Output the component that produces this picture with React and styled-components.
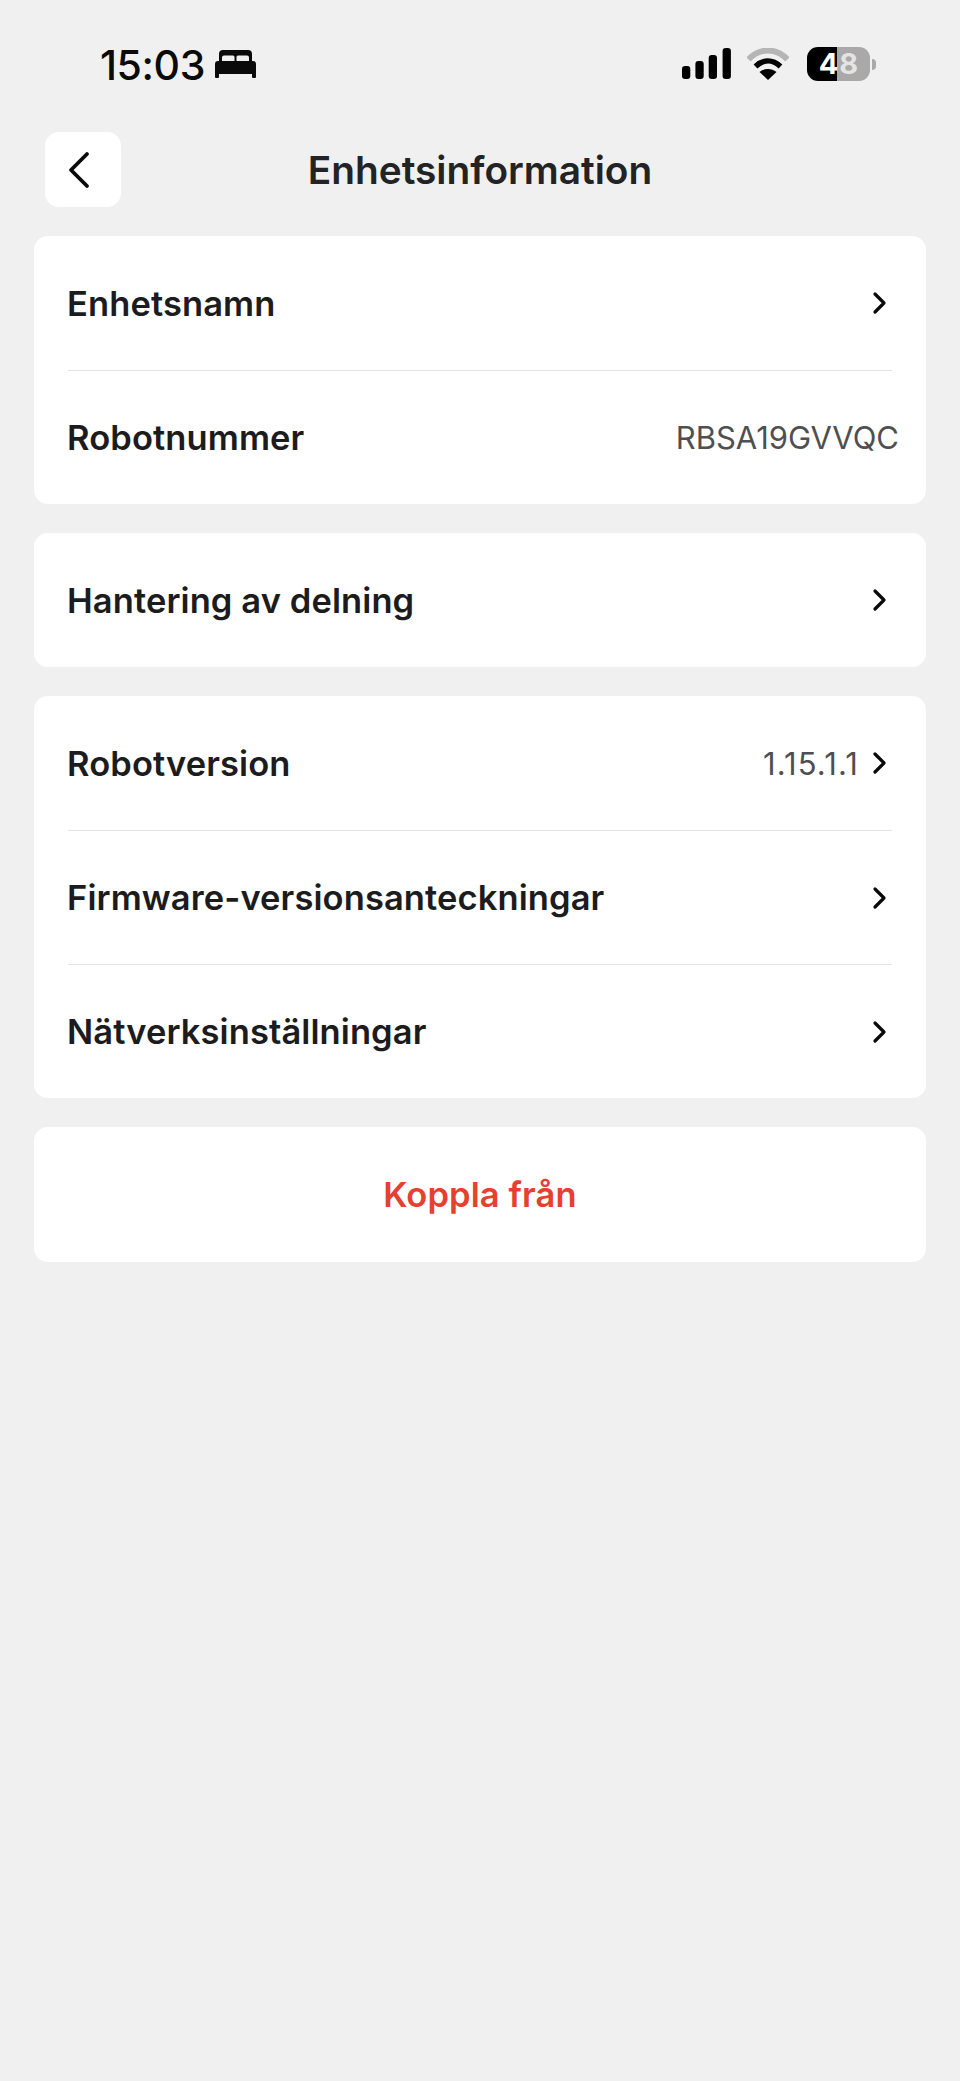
import styled, { createGlobalStyle } from "styled-components";

const GlobalStyle = createGlobalStyle`
  html, body {
    margin: 0;
    padding: 0;
    background: #f0f0f0;
  }
  * {
    box-sizing: border-box;
  }
`;

const Page = styled.div`
  width: 960px;
  height: 2081px;
  overflow: hidden;
  background: #f0f0f0;
  font-family: Inter, "Noto Sans", sans-serif;
  color: #1c1c1e;
`;

const StatusBar = styled.div`
  display: flex;
  justify-content: space-between;
  align-items: center;
  height: 132px;
  padding: 0 84px 4px 100px;
`;

const TimeBlock = styled.div`
  display: flex;
  align-items: center;
  gap: 10px;
`;

const Time = styled.span`
  margin-top: 2px;
  font-size: 41px;
  font-weight: 500;
  letter-spacing: -0.4px;
  color: #0a0a0a;
`;

const Indicators = styled.div`
  display: flex;
  align-items: center;
  gap: 16px;
`;

const BatteryWrap = styled.div`
  display: flex;
  align-items: center;
  gap: 2px;
  margin-left: 2px;
`;

const Battery = styled.div`
  display: flex;
  justify-content: center;
  gap: 1px;
  width: 63px;
  height: 34px;
  border-radius: 11px;
  overflow: hidden;
  background: linear-gradient(90deg, #000 0 30px, #a9a9a9 30px 100%);
  font-size: 29px;
  font-weight: 700;
  line-height: 34px;
`;

const BatteryDigit = styled.span`
  color: ${(p) => (p.$dim ? "#e4e4e4" : "#fff")};
`;

const BatteryTip = styled.div`
  width: 4px;
  height: 11px;
  border-radius: 0 4px 4px 0;
  background: #a9a9a9;
`;

const Header = styled.div`
  display: grid;
  grid-template-columns: 76px 1fr 76px;
  align-items: center;
  height: 75px;
  margin: 0 45px 29px;
`;

const BackButton = styled.div`
  display: flex;
  align-items: center;
  justify-content: center;
  width: 76px;
  height: 75px;
  padding-right: 8px;
  border-radius: 14px;
  background: #fff;
`;

const Title = styled.h1`
  margin: 0 0 1px;
  font-size: 38.8px;
  font-weight: 600;
  text-align: center;
  color: #232325;
`;

const CardList = styled.div`
  display: flex;
  flex-direction: column;
  gap: 29px;
  margin: 0 34px;
`;

const Card = styled.div`
  border-radius: 14px;
  background: #fff;
  padding: 0 34px;
`;

const Row = styled.div`
  display: flex;
  align-items: center;
  justify-content: space-between;
  height: 134px;
  & + & {
    border-top: 1px solid #e3e3e5;
  }
`;

const Label = styled.span`
  margin-left: -1px;
  font-size: 34.5px;
  font-weight: 600;
  letter-spacing: 0.1px;
  color: #1c1c1e;
`;

const Right = styled.div`
  display: flex;
  align-items: center;
  gap: 7px;
`;

const Value = styled.span`
  font-size: 31px;
  font-weight: 400;
  color: #4f4f52;
  letter-spacing: ${(p) => p.$tracking || 0}px;
  margin-right: ${(p) => (p.$overhang ? "-7px" : "0")};
`;

const DangerRow = styled.div`
  display: flex;
  align-items: center;
  justify-content: center;
  height: 135px;
  font-size: 34.5px;
  font-weight: 600;
  letter-spacing: 0.1px;
  color: #e6402f;
`;

const Chevron = () => (
  <svg width="26" height="26" viewBox="0 0 26 26" fill="none">
    <path d="M9 4l9 9-9 9" stroke="#0a0a0a" strokeWidth="3.200" strokeLinecap="round" strokeLinejoin="round" />
  </svg>
);

const BedIcon = () => (
  <svg width="41" height="28" viewBox="0 0 41 28" fill="#0a0a0a">
    <path d="M4 12V4a4 4 0 0 1 4-4h25a4 4 0 0 1 4 4v8h-3V7.500a2 2 0 0 0-2-2h-9a1.500 1.500 0 0 0-1.500 1.500v5h-2V7a1.500 1.500 0 0 0-1.500-1.500H9a2 2 0 0 0-2 2V12z" />
    <path d="M3 11h35a3 3 0 0 1 3 3v13a1 1 0 0 1-1 1h-2a1 1 0 0 1-1-1v-3H4v3a1 1 0 0 1-1 1H1a1 1 0 0 1-1-1V14a3 3 0 0 1 3-3z" />
  </svg>
);

const SignalIcon = () => (
  <svg width="49" height="32" viewBox="0 0 49 32" fill="#000">
    <rect x="0" y="18" width="8.300" height="13" rx="3" />
    <rect x="13.400" y="13" width="8.300" height="18" rx="3" />
    <rect x="26.700" y="7" width="8.300" height="24" rx="3" />
    <rect x="40.600" y="0" width="8.300" height="31" rx="3" />
  </svg>
);

const WifiIcon = () => (
  <svg width="42" height="32" viewBox="0 0 42 32" fill="none">
    <path d="M1.500 11.500C13 -0.500 29 -0.500 40.500 11.500" stroke="#b5b5b5" strokeWidth="6" />
    <path d="M8.500 18.500c8-7.500 17-7.500 25 0" stroke="#000" strokeWidth="5.500" />
    <path d="M21 32l-8.500-8c5-4 12-4 17 0z" fill="#000" />
  </svg>
);

const rows = [
  [
    { label: "Enhetsnamn", chevron: true },
    { label: "Robotnummer", value: "RBSA19GVVQC", overhang: true },
  ],
  [{ label: "Hantering av delning", chevron: true }],
  [
    { label: "Robotversion", value: "1.15.1.1", tracking: 1.1, chevron: true },
    { label: "Firmware-versionsanteckningar", chevron: true },
    { label: "Nätverksinställningar", chevron: true },
  ],
];

export default function App() {
  return (
    <Page>
      <GlobalStyle />
      <StatusBar>
        <TimeBlock>
          <Time>15:03</Time>
          <BedIcon />
        </TimeBlock>
        <Indicators>
          <SignalIcon />
          <WifiIcon />
          <BatteryWrap>
            <Battery>
              <BatteryDigit>4</BatteryDigit>
              <BatteryDigit $dim>8</BatteryDigit>
            </Battery>
            <BatteryTip />
          </BatteryWrap>
        </Indicators>
      </StatusBar>
      <Header>
        <BackButton>
          <svg width="24" height="38" viewBox="0 0 24 38" fill="none">
            <path d="M20 3L4 19l16 16" stroke="#0a0a0a" strokeWidth="3.800" strokeLinecap="round" strokeLinejoin="round" />
          </svg>
        </BackButton>
        <Title>Enhetsinformation</Title>
        <span />
      </Header>
      <CardList>
        {rows.map((group, i) => (
          <Card key={i}>
            {group.map((row) => (
              <Row key={row.label}>
                <Label>{row.label}</Label>
                <Right>
                  {row.value && (
                    <Value $overhang={row.overhang} $tracking={row.tracking}>
                      {row.value}
                    </Value>
                  )}
                  {row.chevron && <Chevron />}
                </Right>
              </Row>
            ))}
          </Card>
        ))}
        <Card>
          <DangerRow>Koppla från</DangerRow>
        </Card>
      </CardList>
    </Page>
  );
}
